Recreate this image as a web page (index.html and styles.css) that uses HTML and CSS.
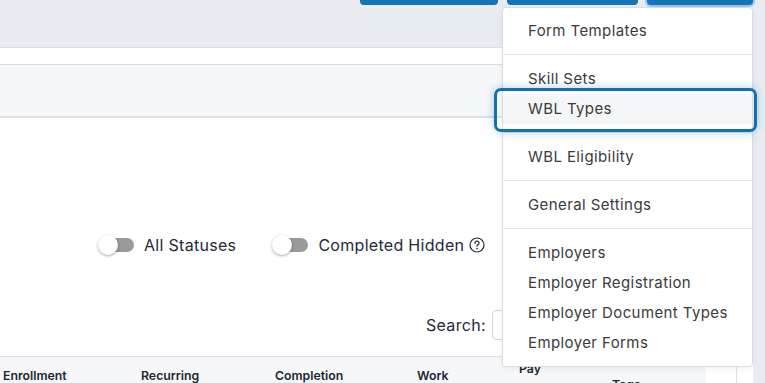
FILE: index.html
```html
<!DOCTYPE html>
<html lang="en">
<head>
    <meta charset="UTF-8">
    <meta name="viewport" content="width=device-width, initial-scale=1.0">
    <title>Work Based Learning</title>
    <link rel="stylesheet" href="styles.css">
</head>
<body>

    <!-- Top action bar -->
    <div class="topbar">
        <button class="top-btn btn-one"></button>
        <button class="top-btn btn-two"></button>
        <div class="menu-wrap">
            <button class="top-btn btn-three"></button>

            <!-- Settings dropdown -->
            <ul class="dropdown">
                <li class="item">Form Templates</li>
                <li class="divider"></li>
                <li class="item">Skill Sets</li>
                <li class="item active">WBL Types</li>
                <li class="divider"></li>
                <li class="item">WBL Eligibility</li>
                <li class="divider"></li>
                <li class="item">General Settings</li>
                <li class="divider"></li>
                <li class="item">Employers</li>
                <li class="item">Employer Registration</li>
                <li class="item">Employer Document Types</li>
                <li class="item">Employer Forms</li>
            </ul>
        </div>
    </div>

    <!-- Main card -->
    <div class="card">
        <div class="card-strip"></div>
        <div class="card-header"></div>

        <div class="card-body">
            <div class="filters">
                <label class="toggle">
                    <span class="switch"><span class="knob"></span></span>
                    <span class="toggle-label">All Statuses</span>
                </label>
                <label class="toggle">
                    <span class="switch"><span class="knob"></span></span>
                    <span class="toggle-label">Completed Hidden</span>
                    <svg class="help" viewBox="0 0 16 16" width="16" height="16">
                        <circle cx="8" cy="8" r="7" fill="none" stroke="currentColor" stroke-width="1.2"/>
                        <path d="M6 6.2a2 2 0 0 1 4 0c0 1.3-2 1.5-2 3" fill="none" stroke="currentColor" stroke-width="1.2" stroke-linecap="round"/>
                        <circle cx="8" cy="11.6" r="0.8" fill="currentColor"/>
                    </svg>
                </label>
            </div>

            <div class="search-row">
                <label class="search-label">Search:</label>
                <input type="text" class="search-input">
            </div>

            <div class="table-wrap">
                <div class="table-head">
                    <div class="th th-enroll">Enrollment</div>
                    <div class="th th-recur">Recurring</div>
                    <div class="th th-compl">Completion</div>
                    <div class="th th-work">Work</div>
                    <div class="th th-pay">Pay</div>
                    <div class="th th-tags">Tags</div>
                </div>
                <div class="table-side"></div>
            </div>
        </div>
    </div>

</body>
</html>
```

FILE: styles.css
```css
/* Base */
body {
    font-family: Inter, 'Noto Sans', sans-serif;
    background-color: #e9edf2;
    color: #1f2a3a;
    margin: 0;
    padding: 0;
    width: 765px;
    height: 383px;
    overflow: hidden;
}

/* Top bar with buttons */
.topbar {
    height: 47px;
    display: flex;
    align-items: flex-start;
    padding-left: 360px;
    gap: 9px;
}

.top-btn {
    display: block;
    height: 6px;
    margin-top: -1px;
    border: none;
    background-color: #1475b4;
    border-radius: 0 0 4px 4px;
    padding: 0;
}

.btn-one {
    width: 138px;
}

.btn-two {
    width: 131px;
}

.btn-three {
    width: 106px;
    box-shadow: 0 0 0 2px #9cc4ec;
}

.menu-wrap {
    position: relative;
}

/* Dropdown menu */
.dropdown {
    position: absolute;
    top: 7px;
    left: -145px;
    width: 249px;
    margin: 0;
    padding: 8px 0;
    list-style: none;
    background-color: #fff;
    border: 1px solid #d9dde2;
    border-radius: 4px;
    box-shadow: 0 2px 6px rgba(0, 0, 0, 0.06);
    z-index: 10;
}

.item {
    position: relative;
    height: 30px;
    line-height: 30px;
    padding-left: 25px;
    font-size: 15px;
    letter-spacing: 0.4px;
    color: #3b3b3b;
    white-space: nowrap;
}

.item.active {
    background-color: #f5f6f8;
}

.item.active::after {
    content: "";
    position: absolute;
    left: -9px;
    right: -5px;
    top: -6px;
    bottom: -8px;
    border: 3px solid #1370ad;
    border-radius: 7px;
    box-shadow: 0 0 9px rgba(19, 112, 173, 0.35);
}

.divider {
    height: 1px;
    margin: 8px 0 9px;
    background-color: #e4e7eb;
}

/* Card */
.card {
    width: 753px;
    background-color: #fff;
    border-top: 1px solid #dcdfe3;
}

.card-strip {
    height: 16px;
}

.card-header {
    height: 51px;
    background-color: #f5f7f9;
    border-top: 1px solid #dae1e6;
    border-bottom: 2px solid #dae1e6;
}

/* Toggle filters */
.filters {
    display: flex;
    align-items: center;
    height: 20px;
    margin-top: 117px;
    padding-left: 99px;
    gap: 37px;
}

.toggle {
    display: flex;
    align-items: center;
    font-size: 16px;
    letter-spacing: 0.3px;
}

.switch {
    position: relative;
    width: 35px;
    height: 14px;
    margin-right: 10px;
    background-color: #9a9a9a;
    border-radius: 7px;
}

.knob {
    position: absolute;
    left: -1px;
    top: -3px;
    width: 20px;
    height: 20px;
    background-color: #fff;
    border-radius: 50%;
    box-shadow: 0 1px 3px rgba(0, 0, 0, 0.35);
}

.help {
    margin-left: 5px;
}

/* Search row */
.search-row {
    display: flex;
    align-items: center;
    padding-left: 426px;
    margin-top: 55px;
    gap: 6px;
}

.search-label {
    font-size: 16px;
    letter-spacing: 0.3px;
}

.search-input {
    width: 200px;
    height: 28px;
    padding: 0;
    border: 1px solid #ced4da;
    border-radius: 4px;
}

/* Table */
.table-wrap {
    display: flex;
    margin-top: 16px;
    width: 736px;
    border-right: 1px solid #dee2e6;
}

.table-head {
    flex: 1;
    display: flex;
    height: 40px;
    background-color: #f5f7f9;
    border-top: 1px solid #dee2e6;
}

.table-side {
    width: 30px;
    border-top: 1px solid #dee2e6;
}

.th {
    font-size: 12.3px;
    font-weight: 600;
    color: #1c2733;
    padding-top: 11px;
}

.th-enroll {
    width: 138px;
    padding-left: 3px;
}

.th-recur {
    width: 134px;
}

.th-compl {
    width: 142px;
}

.th-work {
    width: 102px;
}

.th-pay {
    width: 93px;
    padding-top: 4px;
}

.th-tags {
    padding-top: 20px;
}
```
